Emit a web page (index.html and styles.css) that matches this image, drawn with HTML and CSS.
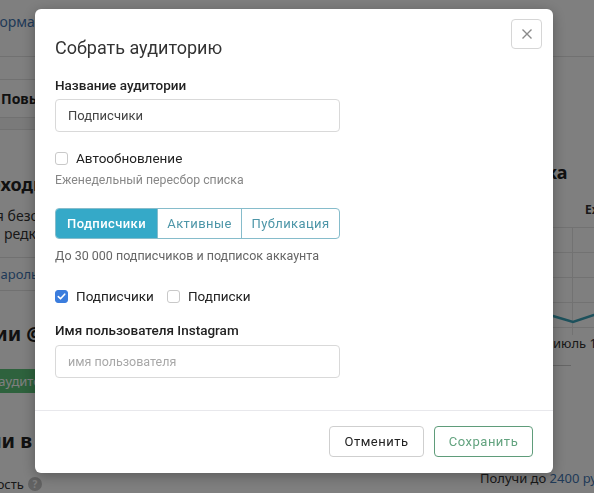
FILE: index.html
```html
<!DOCTYPE html>
<html lang="ru">
<head>
<meta charset="utf-8">
<title>Собрать аудиторию</title>
<link rel="stylesheet" href="styles.css">
</head>
<body>
<div class="page">
  <div class="topbar"><span class="toplink">Информация</span></div>
  <div class="cols">
    <div class="left">
      <div class="subnav"></div>
      <div class="tabrow"><span class="tab">Повысить охват</span></div>
      <div class="card">
        <h2 class="lh">Необходимо войти</h2>
        <p class="lp">Для безопасности</p>
        <p class="lp">Мы редко</p>
        <div class="lrow"><span class="llink">Пароль</span></div>
        <h2 class="lh2">Акции @username</h2>
        <div class="greenbar">Собрать аудиторию</div>
        <h2 class="lh3">Лиии в реальном</h2>
        <div class="lsmall">Активность <span class="q">?</span></div>
      </div>
    </div>
    <div class="right">
      <h2 class="rh">Статистика</h2>
      <div class="legend">Ежедневно</div>
      <svg class="chart" width="140" height="117" viewBox="0 0 140 117">
        <g stroke="#e4e4e4" stroke-width="1">
          <line x1="0" y1="9.5" x2="140" y2="9.5"/>
          <line x1="0" y1="34.5" x2="140" y2="34.5"/>
          <line x1="0" y1="59.5" x2="140" y2="59.5"/>
          <line x1="0" y1="84.5" x2="140" y2="84.5"/>
          <line x1="0" y1="109.5" x2="140" y2="109.5"/>
          <line x1="109.5" y1="9" x2="109.5" y2="117"/>
        </g>
        <polyline points="70,95 90,98 110,104 131,97 140,94" fill="none" stroke="#3aa3b8" stroke-width="2.5"/>
      </svg>
      <div class="axis">июль 1</div>
      <div class="rline"></div>
      <div class="promo">Получи до <span class="plink">2400 руб</span></div>
    </div>
  </div>
</div>

<div class="overlay"></div>

<div class="modal">
  <button class="close" type="button" aria-label="Закрыть">
    <svg width="12" height="12" viewBox="0 0 12 12"><path d="M1.5 1.5 L10.5 10.5 M10.5 1.5 L1.5 10.5" stroke="#8a8a8a" stroke-width="1.4" fill="none"/></svg>
  </button>
  <div class="modal-body">
    <h1 class="title">Собрать аудиторию</h1>
    <div class="label">Название аудитории</div>
    <div class="input">Подписчики</div>
    <div class="check-row auto"><span class="box"></span><span>Автообновление</span></div>
    <div class="hint">Еженедельный пересбор списка</div>
    <div class="seg">
      <div class="seg-item active s1">Подписчики</div>
      <div class="seg-item s2">Активные</div>
      <div class="seg-item s3">Публикация</div>
    </div>
    <div class="note">До 30 000 подписчиков и подписок аккаунта</div>
    <div class="checks">
      <div class="check-row"><span class="box on"><svg width="11" height="11" viewBox="0 0 11 11"><path d="M2.3 5.6 L4.5 7.8 L8.7 3.2" stroke="#fff" stroke-width="1.6" fill="none" stroke-linecap="round" stroke-linejoin="round"/></svg></span><span>Подписчики</span></div>
      <div class="check-row"><span class="box"></span><span>Подписки</span></div>
    </div>
    <div class="label label2">Имя пользователя Instagram</div>
    <div class="input placeholder">имя пользователя</div>
  </div>
  <div class="modal-footer">
    <button class="btn btn-cancel" type="button">Отменить</button>
    <button class="btn btn-save" type="button">Сохранить</button>
  </div>
</div>
</body>
</html>
```
FILE: styles.css
```css
* { box-sizing: border-box; }
html, body { margin: 0; }
body {
  width: 594px;
  height: 493px;
  overflow: hidden;
  font-family: "Noto Sans", "Open Sans", sans-serif;
  background: #f4f4f4;
  color: #222;
}

/* background page */
.page { width: 594px; height: 493px; overflow: hidden; }
.topbar {
  height: 57px;
  background: #fff;
  border-bottom: 1px solid #e2e2e2;
  padding: 10px 0 0 0;
}
.toplink { display: inline-block; margin-left: -30px; font-size: 14px; line-height: 20px; color: #3f74b0; }
.cols { display: grid; grid-template-columns: 563px 400px; margin-left: -100px; }
.left { display: flex; flex-direction: column; }
.subnav { height: 23px; border-bottom: 1px solid #e2e2e2; background: #fff; }
.tabrow { height: 38px; border-bottom: 1px solid #e2e2e2; background: #fff; display: flex; align-items: center; padding-left: 101px; }
.tab { font-size: 14px; font-weight: 700; color: #222; }
.card { margin-top: 11px; border-top: 1px solid #e2e2e2; background: #fff; height: 400px; }
.lh { margin: 42px 0 0; padding-left: 54px; font-size: 18px; line-height: 24px; font-weight: 700; }
.lp { margin: 0; padding-left: 77px; font-size: 14px; line-height: 18px; color: #333; }
.lp:first-of-type { margin-top: 11px; }
.lrow { margin-top: 14px; border-top: 1px solid #e2e2e2; border-bottom: 1px solid #e2e2e2; padding: 4px 0 6px 91px; }
.llink { font-size: 13px; line-height: 20px; color: #3f74b0; }
.lh2 { margin: 30px 0 0; padding-left: 55px; font-size: 20px; line-height: 26px; font-weight: 700; }
.greenbar { margin-top: 22px; height: 24px; background: #5cc47a; color: #fff; font-size: 13px; line-height: 24px; padding-left: 43px; width: 200px; }
.lh3 { margin: 35px 0 0; padding-left: 60px; font-size: 20px; line-height: 26px; font-weight: 700; }
.lsmall { margin-top: 21px; padding-left: 52px; font-size: 13px; line-height: 18px; color: #333; display: flex; align-items: center; gap: 4px; }
.q { display: inline-flex; width: 14px; height: 14px; border-radius: 50%; background: #c4c4c4; color: #fff; font-size: 10px; font-weight: 700; align-items: center; justify-content: center; }

.right { display: flex; flex-direction: column; background: #fff; }
.rh { margin: 103px 0 0; font-size: 18px; line-height: 24px; font-weight: 700; }
.legend { margin-top: 18px; padding-left: 122px; font-size: 12px; line-height: 16px; font-weight: 700; color: #333; }
.chart { display: block; margin-top: 0; }
.axis { padding-left: 90px; font-size: 13px; line-height: 16px; color: #333; }
.rline { margin: 14px 0 0 90px; width: 18px; border-top: 1px solid #ccc; }
.promo { margin-top: 103px; padding-left: 17px; font-size: 13px; line-height: 18px; color: #333; }
.plink { color: #3f74b0; }

/* overlay + modal */
.overlay { position: fixed; inset: 0; background: rgba(0, 0, 0, 0.5); }
.modal {
  position: fixed;
  left: 35px;
  top: 9px;
  width: 518px;
  height: 464px;
  background: #fff;
  border-radius: 6px;
  box-shadow: 0 3px 14px rgba(0, 0, 0, 0.3);
  display: flex;
  flex-direction: column;
  color: #222;
  font-family: Roboto, "Noto Sans", sans-serif;
}
.close {
  position: absolute;
  top: 10px;
  right: 11px;
  width: 31px;
  height: 30px;
  border: 1px solid #d6d6d6;
  border-radius: 4px;
  background: #fff;
  padding: 0;
  display: flex;
  align-items: center;
  justify-content: center;
}
.modal-body { flex: 1; padding: 27px 20px 0; }
.title { margin: 0 0 15px; font-size: 18px; line-height: 24px; font-weight: 400; color: #333; }
.label { font-size: 13.5px; line-height: 20px; font-weight: 500; color: #222; margin-bottom: 4px; }
.label2 { margin-top: 14px; margin-bottom: 5px; }
.input {
  width: 285px;
  height: 33px;
  border: 1px solid #d9d9d9;
  border-radius: 4px;
  padding: 0 12px;
  display: flex;
  align-items: center;
  font-size: 13px;
  color: #444;
}
.input.placeholder { color: #a8a8a8; font-size: 12.5px; }
.check-row { display: flex; align-items: center; gap: 8px; font-size: 13.5px; line-height: 20px; color: #222; }
.auto { margin-top: 16px; }
.box {
  width: 13px;
  height: 13px;
  border: 1px solid #c9c9c9;
  border-radius: 3px;
  background: #fff;
  display: inline-flex;
  align-items: center;
  justify-content: center;
  flex: none;
}
.box.on { background: #3b7ddd; border-color: #3b7ddd; }
.hint { margin-top: 3px; font-size: 12.3px; line-height: 18px; color: #878787; }
.seg {
  margin-top: 19px;
  width: 285px;
  height: 31px;
  display: flex;
  border: 1px solid #86bccb;
  border-radius: 4px;
  overflow: hidden;
}
.seg-item {
  display: flex;
  align-items: center;
  justify-content: center;
  font-size: 13px;
  letter-spacing: 0.4px;
  color: #4d96a8;
  border-left: 1px solid #86bccb;
}
.seg-item.active { border-left: 0; background: #35a9c8; color: #fff; font-weight: 500; }
.s1 { width: 101px; }
.s2 { width: 84px; }
.s3 { width: 98px; }
.note { margin-top: 8px; font-size: 12.5px; line-height: 18px; color: #666; }
.checks { margin-top: 21px; display: flex; gap: 13px; }
.modal-footer {
  border-top: 1px solid #e8e8ec;
  padding: 15px 20px 16px;
  display: flex;
  justify-content: flex-end;
  gap: 10px;
}
.btn {
  height: 31px;
  border: 1px solid #cfcfcf;
  border-radius: 4px;
  background: #fff;
  font-family: inherit;
  font-size: 13px;
  letter-spacing: 0.5px;
  color: #222;
  padding: 0;
}
.btn-cancel { width: 95px; }
.btn-save { width: 99px; border-color: #5f9c7a; color: #63a37f; }
```
